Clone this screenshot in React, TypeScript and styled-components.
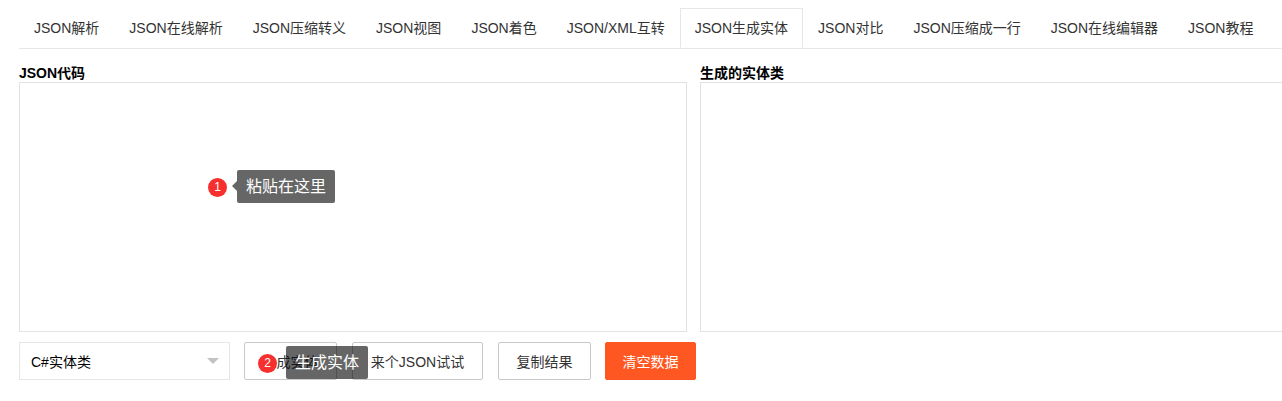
import React from "react";
import styled, { createGlobalStyle } from "styled-components";

const GlobalStyle = createGlobalStyle`
    html, body {
        margin: 0;
        padding: 0;
        background: #fff;
        overflow: hidden;
    }
    body {
        font-family: "Liberation Sans", "Noto Sans CJK SC", Arial, sans-serif;
        color: #333;
    }
`

const Page = styled.div`
    width: 1400px;
    padding: 8px 0 0 19px;
    box-sizing: border-box;
`
const TabBar = styled.ul`
    display: flex;
    margin: 0;
    padding: 0;
    list-style: none;
    border-bottom: 1px solid #e6e6e6;
    height: 40px;
`
const Tab = styled.li<{ $active?: boolean }>`
    height: 40px;
    line-height: 38px;
    padding: 0 14px;
    font-size: 14px;
    color: #333;
    box-sizing: border-box;
    border: 1px solid ${p => (p.$active ? "#e6e6e6" : "transparent")};
    border-bottom: ${p => (p.$active ? "1px solid #fff" : "none")};
    background: #fff;
    white-space: nowrap;
`
const Columns = styled.div`
    display: grid;
    grid-template-columns: 668px 668px;
    column-gap: 13px;
    margin-top: 15px;
`
const Label = styled.div`
    font-size: 14px;
    font-weight: bold;
    color: #000;
    line-height: 18px;
    height: 18px;
`
const Editor = styled.div`
    position: relative;
    height: 250px;
    border: 1px solid #e2e2e2;
    box-sizing: border-box;
`
const Controls = styled.div`
    position: relative;
    display: flex;
    align-items: center;
    margin-top: 10px;
`
const Select = styled.div`
    display: flex;
    align-items: center;
    justify-content: space-between;
    width: 211px;
    height: 38px;
    padding: 0 10px 0 11px;
    box-sizing: border-box;
    border: 1px solid #e6e6e6;
    font-size: 14px;
    color: #000;
    margin-right: 14px;
`
const Caret = styled.span`
    width: 0;
    height: 0;
    border-left: 6px solid transparent;
    border-right: 6px solid transparent;
    border-top: 6px solid #c2c2c2;
`
const Button = styled.button<{ $w: number; $gap?: number; $primary?: boolean }>`
    width: ${p => p.$w}px;
    height: 38px;
    margin-right: ${p => p.$gap ?? 15}px;
    box-sizing: border-box;
    border: 1px solid ${p => (p.$primary ? "#ff5722" : "#c9c9c9")};
    border-radius: 2px;
    background: ${p => (p.$primary ? "#ff5722" : "#fff")};
    color: ${p => (p.$primary ? "#fff" : "#333")};
    font-family: inherit;
    font-size: 14px;
    padding: 0;
`
const Badge = styled.span<{ $x: number; $y: number }>`
    position: absolute;
    left: ${p => p.$x}px;
    top: ${p => p.$y}px;
    width: 19px;
    height: 19px;
    border-radius: 50%;
    background: #f5302e;
    color: #fff;
    font-size: 12px;
    line-height: 19px;
    text-align: center;
    z-index: 3;
`
const Tip = styled.div<{ $x: number; $y: number; $arrow?: boolean }>`
    position: absolute;
    left: ${p => p.$x}px;
    top: ${p => p.$y}px;
    padding: 0 9px;
    height: 33px;
    line-height: 33px;
    border-radius: 2px;
    background: rgba(0, 0, 0, 0.6);
    color: #fff;
    font-size: 16px;
    white-space: nowrap;
    z-index: 2;
    &::before {
        content: "";
        display: ${p => (p.$arrow ? "block" : "none")};
        position: absolute;
        left: -5px;
        top: 11px;
        border-top: 5px solid transparent;
        border-bottom: 5px solid transparent;
        border-right: 5px solid rgba(0, 0, 0, 0.6);
    }
`

const tabs = [
    "JSON解析",
    "JSON在线解析",
    "JSON压缩转义",
    "JSON视图",
    "JSON着色",
    "JSON/XML互转",
    "JSON生成实体",
    "JSON对比",
    "JSON压缩成一行",
    "JSON在线编辑器",
    "JSON教程",
]

export default function App() {
    return (
        <Page>
            <GlobalStyle />
            <TabBar>
                {tabs.map(t => (
                    <Tab key={t} $active={t === "JSON生成实体"}>{t}</Tab>
                ))}
            </TabBar>
            <Columns>
                <div>
                    <Label>JSON代码</Label>
                    <Editor>
                        <Badge $x={188} $y={95}>1</Badge>
                        <Tip $x={217} $y={87} $arrow>粘贴在这里</Tip>
                    </Editor>
                </div>
                <div>
                    <Label>生成的实体类</Label>
                    <Editor />
                </div>
            </Columns>
            <Controls>
                <Select>
                    C#实体类
                    <Caret />
                </Select>
                <Button $w={93}>生成实体</Button>
                <Button $w={131}>来个JSON试试</Button>
                <Button $w={93} $gap={14}>复制结果</Button>
                <Button $w={91} $primary>清空数据</Button>
                <Badge $x={239} $y={12}>2</Badge>
                <Tip $x={267} $y={4}>生成实体</Tip>
            </Controls>
        </Page>
    )
}
